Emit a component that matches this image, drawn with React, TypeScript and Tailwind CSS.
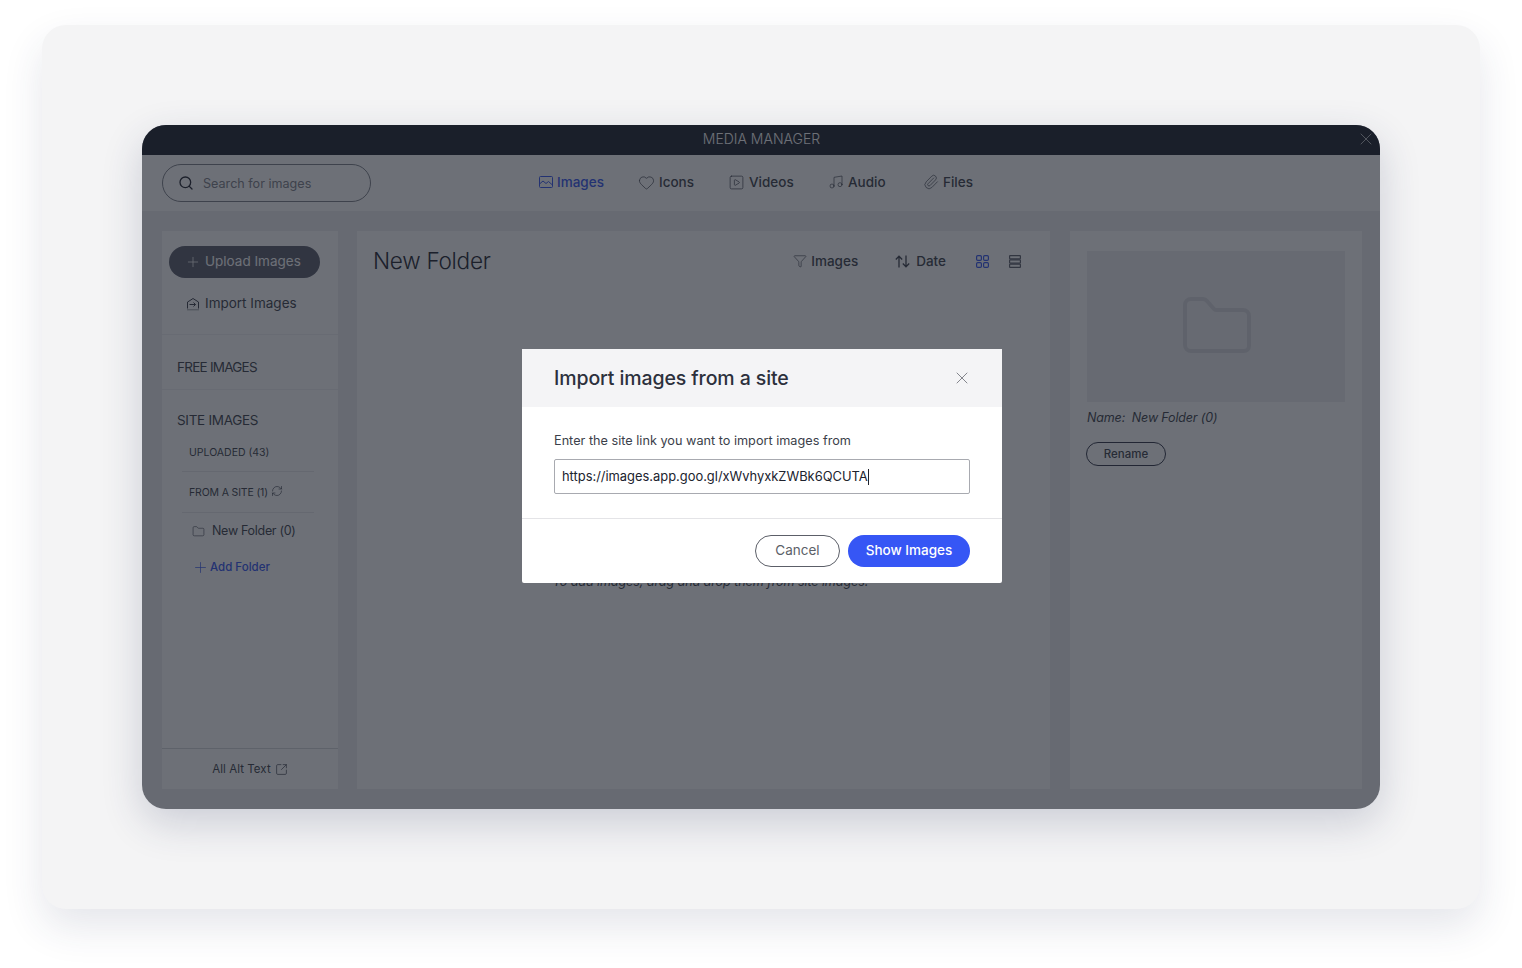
import React from 'react';
import { Search, Heart, SquarePlay, Music, Paperclip, Funnel, Plus, Folder, RefreshCw, SquareArrowOutUpRight, X } from 'lucide-react';

const ImageIcon = () => (
  <svg width="14" height="14" viewBox="0 0 14 14" fill="none" stroke="currentColor" strokeWidth="1">
    <rect x="0.5" y="1.5" width="13" height="11" rx="1" />
    <path d="M0.5 9l3.5-3 3 2.5 2.5-2 4 3.5" />
  </svg>
);

const tabs = [
  { label: 'Images', icon: <ImageIcon />, active: true, cls: 'w-[101px] gap-[4px]' },
  { label: 'Icons', icon: <Heart size={17} strokeWidth={1} className="-mx-[2px]" />, active: false, cls: 'w-[90px] gap-[6px]' },
  { label: 'Videos', icon: <SquarePlay size={17} strokeWidth={1} className="-mx-[2px]" />, active: false, cls: 'w-[99px] gap-[6px]' },
  { label: 'Audio', icon: <Music size={16} strokeWidth={1} className="-mx-px" />, active: false, cls: 'w-[95px] gap-[5px]' },
  { label: 'Files', icon: <Paperclip size={16} strokeWidth={1} className="-mx-px" />, active: false, cls: 'gap-[5px]' },
];

const ImportIcon = () => (
  <svg width="14" height="14" viewBox="0 0 14 14" fill="none" stroke="currentColor" strokeWidth="1">
    <path d="M1.5 11.5V5L4 3.5 7 1.5l5.5 3.5v6.5" />
    <path d="M1.5 12.8h11" strokeDasharray="1 1" />
    <path d="M3.5 7.5h6M7.5 5.5l2 2-2 2" />
  </svg>
);

const SortIcon = () => (
  <svg width="15" height="13" viewBox="0 0 15 13" fill="none" stroke="currentColor" strokeWidth="1.3">
    <path d="M4 12.5V1.5M0.8 4.5L4 1.2l3.2 3.3" />
    <path d="M11 0.5v11M7.8 8.5l3.2 3.3 3.2-3.3" />
  </svg>
);

const GridIcon = () => (
  <svg width="13" height="13" viewBox="0 0 13 13" fill="none" stroke="currentColor" strokeWidth="1.2">
    <rect x="0.6" y="0.6" width="4.8" height="4.8" rx="1.2" />
    <rect x="7.6" y="0.6" width="4.8" height="4.8" rx="1.2" />
    <rect x="0.6" y="7.6" width="4.8" height="4.8" rx="1.2" />
    <rect x="7.6" y="7.6" width="4.8" height="4.8" rx="1.2" />
  </svg>
);

const RowsIcon = () => (
  <svg width="12" height="13" viewBox="0 0 12 13" fill="none" stroke="#5c5f6a" strokeWidth="1.2">
    <rect x="0.6" y="0.6" width="10.8" height="3.2" rx="0.5" />
    <rect x="0.6" y="4.9" width="10.8" height="3.2" rx="0.5" />
    <rect x="0.6" y="9.2" width="10.8" height="3.2" rx="0.5" />
  </svg>
);

const BigFolder = () => (
  <svg width="68" height="56" viewBox="0 0 68 56" fill="none" stroke="#d8d9dd" strokeWidth="4" strokeLinejoin="round">
    <path d="M2 8a6 6 0 0 1 6-6h11a6 6 0 0 1 5 2l7 8a3 3 0 0 0 2 1h27a6 6 0 0 1 6 6v30a5 5 0 0 1-5 5H8a6 6 0 0 1-6-6z" />
  </svg>
);

const Sidebar = () => (
  <aside className="w-[176px] shrink-0 bg-white flex flex-col text-[#3b3f4a]">
    <div className="pt-[15px] pb-[22px] pl-[7px] border-b border-[#f0f0f3]">
      <div className="w-[151px] h-[32px] rounded-full bg-[#5a5d6b] text-white flex items-center pl-[16px] gap-[4px] text-[13.5px] pb-[1px]">
        <Plus size={16} strokeWidth={1.1} />
        <span>Upload Images</span>
      </div>
      <div className="mt-[17px] pl-[17px] flex items-center gap-[5px] text-[13.5px] h-[17px]">
        <ImportIcon />
        <span>Import Images</span>
      </div>
    </div>
    <div className="h-[55px] pl-[15px] pt-[24px] border-b border-[#f0f0f3] text-[13.5px] leading-[17px] tracking-[-0.76px]">FREE IMAGES</div>
    <div className="pl-[15px] pt-[22px] text-[13.5px] leading-[17px] tracking-[-0.3px]">SITE IMAGES</div>
    <div className="mt-[15px] ml-[20px] mr-[24px] border-b border-[#e8e8ec] h-[28px] pl-[7px] flex items-center text-[10.5px] pb-[9px]">UPLOADED (43)</div>
    <div className="ml-[20px] mr-[24px] border-b border-[#e8e8ec] h-[41px] pl-[7px] flex items-center text-[10.5px] tracking-[-0.15px] gap-[3px] pt-[1px]">
      <span>FROM A SITE (1)</span>
      <RefreshCw size={12} strokeWidth={1.3} className="-mt-[3px]" />
    </div>
    <div className="mt-[10px] pl-[30px] h-[17px] flex items-center gap-[7px] text-[12.5px] tracking-[-0.3px]">
      <Folder size={13} strokeWidth={1.1} />
      <span>New Folder (0)</span>
    </div>
    <div className="mt-[19px] pl-[30px] h-[17px] flex items-center gap-[1px] text-[11.5px] font-medium text-[#3355f0]">
      <Plus size={17} strokeWidth={1} />
      <span>Add Folder</span>
    </div>
    <div className="mt-auto h-[41px] border-t border-[#d6d7dc] flex items-center justify-center gap-[4px] text-[11.5px] tracking-[0.05px] pt-px">
      <span>All Alt Text</span>
      <SquareArrowOutUpRight size={13} strokeWidth={1.3} />
    </div>
  </aside>
);

const MainPanel = () => (
  <main className="w-[693px] shrink-0 bg-white flex flex-col pt-[16px] pl-[16px] text-[#3b3f4a]">
    <div className="h-[28px] flex items-center">
      <h1 className="text-[22.6px] font-light tracking-[-0.3px] text-[#20232e]">New Folder</h1>
      <div className="ml-auto flex items-center text-[13.5px] font-medium pr-[29px]">
        <Funnel size={14} strokeWidth={1.1} className="mr-[4px]" />
        <span>Images</span>
        <span className="ml-[37px] mr-[6px] flex"><SortIcon /></span>
        <span>Date</span>
        <span className="ml-[30px] text-[#3355f0] flex"><GridIcon /></span>
        <span className="ml-[20px] flex"><RowsIcon /></span>
      </div>
    </div>
    <p className="mt-[298px] ml-[-2px] text-center text-[12.6px] italic leading-[17px] tracking-[-0.1px]">To add images, drag and drop them from site images.</p>
  </main>
);

const DetailsPanel = () => (
  <aside className="w-[292px] shrink-0 ml-px bg-white px-[17px] pt-[20px] text-[#3b3f4a]">
    <div className="h-[151px] bg-[#eeeef1] flex items-center justify-center pb-[4px] pl-[2px]">
      <BigFolder />
    </div>
    <p className="mt-[7px] text-[12.5px] leading-[17px] italic tracking-[-0.15px]">Name:&nbsp; New Folder (0)</p>
    <div className="mt-[16px] -ml-px w-[80px] h-[24px] rounded-full border border-[#2f3446] flex items-center justify-center text-[11.5px] font-medium pt-px">Rename</div>
  </aside>
);

const ImportModal = () => (
  <div className="absolute left-[380px] top-[224px] w-[480px] h-[234px] bg-white rounded-[2px] flex flex-col">
    <div className="h-[58px] shrink-0 bg-[#f4f4f6] flex items-center pl-[32px] pr-[32px]">
      <h2 className="text-[19.5px] font-medium text-[#2c303c] tracking-[-0.1px] pt-[1px]">Import images from a site</h2>
      <X size={20} strokeWidth={0.9} className="ml-auto -mr-[2px] text-[#5c5f68]" />
    </div>
    <div className="h-[112px] shrink-0 px-[32px] pt-[25px] border-b border-[#e4e4e7]">
      <p className="text-[12.7px] leading-[17px] text-[#3b3f4a]">Enter the site link you want to import images from</p>
      <div className="mt-[10px] h-[35px] border border-[#a8aab0] rounded-[2px] flex items-center pl-[7px] text-[12.9px] text-[#20232e]">
        <span>https://images.app.goo.gl/xWvhyxkZWBk6QCUTA</span>
        <span className="w-px h-[16px] bg-[#20232e]" />
      </div>
    </div>
    <div className="flex-1 flex items-center justify-end gap-[8px] pr-[32px]">
      <div className="w-[85px] h-[32px] rounded-full border border-[#5c5f68] flex items-center justify-center text-[13.5px] text-[#5c5f68] pb-[1px]">Cancel</div>
      <div className="w-[122px] h-[32px] rounded-full bg-[#3656f5] flex items-center justify-center text-[13.5px] font-medium text-white pb-[1px]">Show Images</div>
    </div>
  </div>
);

export default function App() {
  return (
    <div className="min-h-[968px] bg-white pt-[25px] px-[42px] pb-[59px] font-['Inter','Liberation_Sans',sans-serif]">
      <div className="h-[884px] rounded-[24px] bg-[#f4f4f5] p-[100px] shadow-[0_18px_40px_rgba(40,50,90,0.12)]">
        <div className="relative w-[1238px] h-[684px] rounded-[24px] overflow-hidden bg-[#eeeef1] flex flex-col shadow-[0_14px_40px_rgba(40,50,90,0.2)]">
          <header className="relative h-[30px] shrink-0 bg-[#1a1f2b] flex items-center justify-center text-white text-[14px] font-light pb-[3px] pl-[1px]">
            MEDIA MANAGER
            <X size={20} strokeWidth={0.8} className="absolute right-[4px] top-[4px] text-white" />
          </header>
          <div className="h-[56px] shrink-0 bg-white flex items-center pl-[20px]">
            <div className="w-[209px] h-[38px] rounded-full border border-[#7d8088] flex items-center pl-[15px] gap-[9px] text-[12.6px] text-[#7d8088]">
              <Search size={16} strokeWidth={2} className="text-[#20232e] -mt-px" />
              <span className="pt-[2px]">Search for images</span>
            </div>
            <nav className="ml-[168px] flex items-center text-[13.5px] font-medium text-[#3b3f4a] -mt-[2px]">
              {tabs.map(({ label, icon, active, cls }) => (
                <div key={label} className={`flex items-center ${cls} ${active ? 'text-[#3355f0]' : ''}`}>
                  {icon}
                  <span>{label}</span>
                </div>
              ))}
            </nav>
          </div>
          <div className="flex-1 flex pt-[20px] pb-[20px] pl-[20px] gap-[19px]">
            <Sidebar />
            <MainPanel />
            <DetailsPanel />
          </div>
          <div className="absolute inset-0 bg-[#1a1f2b]/[0.64]" />
          <ImportModal />
        </div>
      </div>
    </div>
  );
}
